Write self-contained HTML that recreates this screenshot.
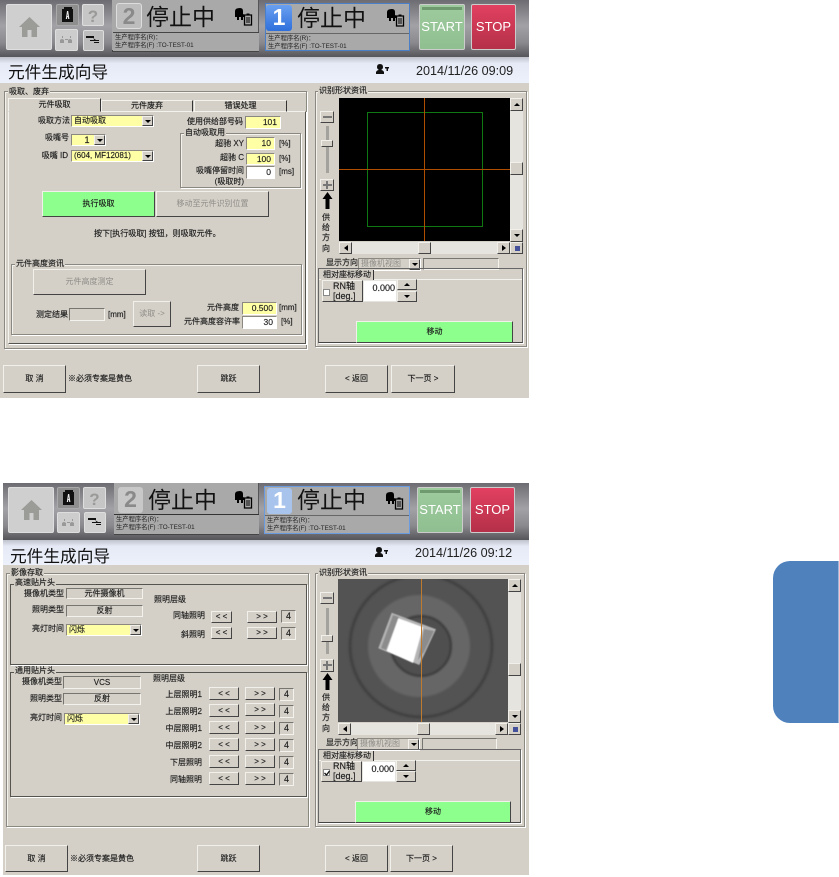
<!DOCTYPE html>
<html><head><meta charset="utf-8"><style>
html,body{margin:0;padding:0;background:#fff}
#p{position:relative;width:839px;height:877px;overflow:hidden;font:8px/10px "Liberation Sans","Noto Sans CJK SC",sans-serif;color:#1c1c1c;-webkit-text-stroke:.15px #1c1c1c;filter:blur(.3px)}
#p div,#p svg{position:absolute;box-sizing:border-box}
.t{white-space:nowrap;height:10px}
.body{background:#d4d0c8}
.hd{background:linear-gradient(#6c6c72 0,#a2a2a6 45%,#8a8a8e 75%,#55555a 100%)}
.band{background:linear-gradient(#bfc2cb 0,#e6eaf6 25%,#edf1fb 100%)}
.g{border:1px solid #8a8880;box-shadow:1px 1px 0 #fff,inset 1px 1px 0 #f4f2ec}
.gd{border:1px solid #55544f;box-shadow:1px 1px 0 #fff}
.gt{background:#d4d0c8;padding:0 1px;white-space:nowrap;height:10px}
.b{background:#d4d0c8;border:1px solid;border-color:#f2f0ea #444 #444 #f2f0ea;text-align:center;white-space:nowrap;display:flex;align-items:center;justify-content:center}
#p .dis{color:#8f8d88;-webkit-text-stroke:0}
.i{border:1px solid;border-color:#8a8880 #fff #fff #8a8880;text-align:right;padding-right:3px;white-space:nowrap;line-height:11px;font-size:8.5px}
.y{background:#ffffa6}.w{background:#fff}
.r{border:1px solid;border-color:#77756f #f4f2ec #f4f2ec #77756f;text-align:center;white-space:nowrap;line-height:10px}
.s{border:1px solid;border-color:#8a8880 #fff #fff #8a8880;white-space:nowrap;padding-left:2px;line-height:10px}
.ar{background:#d4d0c8;border:1px solid;border-color:#f2f0ea #444 #444 #f2f0ea;width:11px;top:0;bottom:0;right:0;display:flex;align-items:center;justify-content:center}
.ar:after,.up:after{content:"";border-left:3px solid transparent;border-right:3px solid transparent;border-top:3px solid #000}
.up:after{border-top:0;border-bottom:3px solid #000}
.lf:after{content:"";border-top:3px solid transparent;border-bottom:3px solid transparent;border-right:4px solid #000;border-left:0}
.rt:after{content:"";border-top:3px solid transparent;border-bottom:3px solid transparent;border-left:4px solid #000;border-right:0}
.sb{background:#e6e4de}
#p .num{border-radius:3px;color:#fff;font:bold 23px/25px "Liberation Sans",sans-serif;text-align:center;-webkit-text-stroke:0}
.stp{font-size:23px;line-height:26px;color:#111;white-space:nowrap;-webkit-text-stroke:0}
.info{font-size:6.300px;line-height:8px;color:#222;background:#a9a9a9;padding:1px 0 0 2px;white-space:nowrap;-webkit-text-stroke:0}
.pan{background:#a9a9a9}
.hb{border-radius:2px;border:1px solid #dedede;-webkit-text-stroke:0}
</style></head><body><div id="p">

<!-- ===== SCREEN 1 ===== -->
<div class="body" style="left:0;top:83px;width:529px;height:315px"></div>
<div class="hd" style="left:0;top:0;width:529px;height:57px"></div>
<div class="band" style="left:0;top:57px;width:529px;height:26px"></div>

<div class="hb" style="left:6px;top:4px;width:46px;height:46px;background:#cfcfcf"></div>
<svg style="left:18px;top:16px" width="23" height="22" viewBox="0 0 23 22"><path d="M11.500 1 1 11h3v10h5.500v-7h4v7H19V11h3z" fill="#9b9b98"/></svg>
<div class="hb" style="left:56px;top:4px;width:23px;height:22px;background:#8e8e8e;border-color:#aaa"></div>
<svg style="left:62px;top:7px" width="11" height="15" viewBox="0 0 11 15"><path d="M2 0h8v2h1v13H0V2h2z" fill="#111"/><path d="M3.800 12 5 4h1.200l1.200 8h-1.200l-.3-2H5.300L5 12zM5.400 9h.6l-.3-2.500z" fill="#eee"/></svg>
<div class="hb" style="left:82px;top:4px;width:22px;height:22px;background:#c6c6c6"></div>
<div class="t" style="left:82px;top:10px;width:22px;height:16px;text-align:center;font:bold 17px/13px 'Liberation Sans',sans-serif;color:#9a9a98;-webkit-text-stroke:0">?</div>
<div class="hb" style="left:55px;top:29px;width:23px;height:22px;background:#cdcdcd"></div>
<svg style="left:59px;top:35px" width="15" height="9" viewBox="0 0 15 9"><path d="M1 8V5q2-2 4 0v3zM9 8V5q2-2 4 0v3zM3 1h1v2H3zM11 1h1v2h-1zM6 4h3v1H6z" fill="#999"/></svg>
<div class="hb" style="left:83px;top:30px;width:21px;height:21px;background:#bdbdbd"></div>
<svg style="left:85px;top:35px" width="16" height="10" viewBox="0 0 16 10"><path d="M1 1h8v2H1zM5 5h9v1H5zM8 3l3 2-1 1zM9 7h5v1H9z" fill="#111"/></svg>

<div class="pan" style="left:112px;top:0;width:147px;height:52px;border-bottom:2px solid #444;border-right:1px solid #555"></div>
<div class="num" style="left:116px;top:3px;width:26px;height:26px;background:#bdbdbd;border:1px solid #ddd;color:#8a8a8a">2</div>
<div class="stp" style="left:146px;top:4px">停止中</div>
<svg style="left:234px;top:8px" width="20" height="18" viewBox="0 0 20 18"><path d="M1 9V3q0-3 5-3 3 0 3 3v3l2 1v2H9v3H7V9H5v3H3V9z" fill="#000"/><path d="M10.500 7h7v10h-7z" fill="none" stroke="#000" stroke-width="1.300"/><path d="M12 10h4M12 12h4M12 14h4" stroke="#000"/><path d="M12.500 5.500h3v2h-3z"/></svg>
<div class="info" style="left:113px;top:32px;width:146px;height:19px;border-top:1px solid #444">生产程序名(R)：<br>生产程序名(F) :TO-TEST-01</div>

<div class="pan" style="left:265px;top:3px;width:145px;height:48px;border:1px solid #4a7fc8"></div>
<div class="num" style="left:266px;top:5px;width:26px;height:26px;background:linear-gradient(#6aa0f0,#2f6fdc)">1</div>
<div class="stp" style="left:297px;top:5px">停止中</div>
<svg style="left:386px;top:9px" width="20" height="18" viewBox="0 0 20 18"><path d="M1 9V3q0-3 5-3 3 0 3 3v3l2 1v2H9v3H7V9H5v3H3V9z" fill="#000"/><path d="M10.500 7h7v10h-7z" fill="none" stroke="#000" stroke-width="1.300"/><path d="M12 10h4M12 12h4M12 14h4" stroke="#000"/><path d="M12.500 5.500h3v2h-3z"/></svg>
<div class="info" style="left:266px;top:33px;width:143px;height:18px;border-top:1px solid #666;border-bottom:1px solid #4a7fc8">生产程序名(R)：<br>生产程序名(F) :TO-TEST-01</div>

<div class="hb" style="left:419px;top:4px;width:46px;height:46px;background:linear-gradient(#9ecb9e,#8fbf90);border-color:#ccc;color:#fff;font-size:13px;line-height:44px;text-align:center">START</div>
<div style="left:422px;top:7px;width:40px;height:3px;background:#6f9a70"></div>
<div class="hb" style="left:471px;top:4px;width:45px;height:46px;background:linear-gradient(#e24060,#b43048);border-color:#ccc;color:#fff;font-size:13px;line-height:44px;text-align:center">STOP</div>

<div class="t" style="left:8px;top:63px;height:20px;font-size:16.700px;line-height:20px;color:#111;-webkit-text-stroke:0">元件生成向导</div>
<svg style="left:375px;top:64px" width="14" height="11" viewBox="0 0 14 11"><path d="M1 10V8q1-2 3-2-2-1-2-3 0-3 3-3t3 3q0 2-2 3 2 0 3 2v2zM10 3h4v1.500h-1V7h-1.500V4.500H10z" fill="#111"/></svg>
<div class="t" style="left:416px;top:64px;height:14px;font:12.600px/14px 'Liberation Sans',sans-serif;color:#222;-webkit-text-stroke:0">2014/11/26 09:09</div>

<!-- left -->
<div class="g" style="left:4px;top:91px;width:303px;height:258px"></div>
<div class="gt" style="left:8px;top:87px">吸取、废弃</div>
<div class="gd" style="left:8px;top:111px;width:298px;height:233px;background:#d4d0c8;border-top-color:#f4f2ec;border-left-color:#f4f2ec"></div>
<div class="t" style="left:8px;top:98px;width:93px;height:14px;background:#d4d0c8;border:1px solid;border-color:#f4f2ec #333 transparent #f4f2ec;text-align:center;line-height:11px">元件吸取</div>
<div class="t" style="left:101px;top:100px;width:92px;height:12px;border:1px solid;border-color:#f4f2ec #333 transparent #f4f2ec;text-align:center">元件废弃</div>
<div class="t" style="left:194px;top:100px;width:93px;height:12px;border:1px solid;border-color:#f4f2ec #333 transparent #f4f2ec;text-align:center">错误处理</div>

<div class="t" style="right:769px;top:116px">吸取方法</div>
<div class="s y" style="left:71px;top:115px;width:83px;height:12px">自动吸取<div class="ar"></div></div>
<div class="t" style="right:770px;top:133px">吸嘴号</div>
<div class="s y" style="left:71px;top:134px;width:35px;height:12px;text-align:center;font-size:9px">&nbsp;&nbsp;1&nbsp;&nbsp;&nbsp;&nbsp;<div class="ar"></div></div>
<div class="t" style="right:771px;top:151px">吸嘴 ID</div>
<div class="s y" style="left:71px;top:150px;width:83px;height:12px">(604, MF12081)<div class="ar"></div></div>

<div class="t" style="right:596px;top:117px">使用供给部号码</div>
<div class="i y" style="left:245px;top:116px;width:36px;height:13px">101</div>
<div class="g" style="left:180px;top:133px;width:121px;height:55px"></div>
<div class="gt" style="left:184px;top:128px">自动吸取用</div>
<div class="t" style="right:595px;top:139px">超驰 XY</div>
<div class="i y" style="left:246px;top:137px;width:29px;height:13px">10</div>
<div class="t" style="left:279px;top:139px">[%]</div>
<div class="t" style="right:595px;top:153px">超驰 C</div>
<div class="i y" style="left:246px;top:153px;width:29px;height:12px">100</div>
<div class="t" style="left:279px;top:154px">[%]</div>
<div class="t" style="right:595px;top:166px">吸嘴停留时间</div>
<div class="i w" style="left:246px;top:166px;width:29px;height:13px">0</div>
<div class="t" style="left:279px;top:167px">[ms]</div>
<div class="t" style="right:595px;top:177px">(吸取时)</div>

<div class="b" style="left:42px;top:191px;width:113px;height:26px;background:#8cff8c">执行吸取</div>
<div class="b dis" style="left:156px;top:191px;width:113px;height:26px">移动至元件识别位置</div>
<div class="t" style="left:94px;top:229px">按下[执行吸取] 按钮，则吸取元件。</div>

<div class="g" style="left:11px;top:264px;width:291px;height:71px"></div>
<div class="gt" style="left:15px;top:259px">元件高度资讯</div>
<div class="b dis" style="left:33px;top:269px;width:113px;height:26px">元件高度测定</div>
<div class="t" style="left:36px;top:310px">测定结果</div>
<div class="r" style="left:69px;top:308px;width:36px;height:13px"></div>
<div class="t" style="left:108px;top:310px">[mm]</div>
<div class="b dis" style="left:133px;top:301px;width:38px;height:26px">读取 -&gt;</div>
<div class="t" style="right:600px;top:303px">元件高度</div>
<div class="i y" style="left:242px;top:302px;width:35px;height:13px">0.500</div>
<div class="t" style="left:279px;top:303px">[mm]</div>
<div class="t" style="right:599px;top:317px">元件高度容许率</div>
<div class="i w" style="left:242px;top:316px;width:35px;height:13px">30</div>
<div class="t" style="left:281px;top:317px">[%]</div>

<div class="b" style="left:3px;top:365px;width:63px;height:28px">取 消</div>
<div class="t" style="left:68px;top:374px">※必须专案是黄色</div>
<div class="b" style="left:197px;top:365px;width:63px;height:28px">跳跃</div>

<!-- right -->
<div class="g" style="left:315px;top:91px;width:212px;height:256px"></div>
<div class="gt" style="left:318px;top:86px">识别形状资讯</div>
<div style="left:339px;top:98px;width:171px;height:143px;background:#000;overflow:hidden">
<div style="left:28px;top:14px;width:116px;height:115px;border:1px solid #107810"></div>
<div style="left:85px;top:0;width:1px;height:143px;background:#b04e00"></div>
<div style="left:0;top:71px;width:171px;height:1px;background:#b04e00"></div>
</div>
<div class="sb" style="left:510px;top:98px;width:13px;height:143px"></div>
<div class="ar up" style="left:510px;top:98px;width:13px;height:13px"></div>
<div class="b" style="left:510px;top:162px;width:13px;height:13px"></div>
<div class="ar" style="left:510px;top:229px;width:13px;height:13px"></div>
<div class="sb" style="left:339px;top:242px;width:171px;height:12px"></div>
<div class="ar lf" style="left:339px;top:242px;width:13px;height:12px"></div>
<div class="b" style="left:418px;top:242px;width:13px;height:12px"></div>
<div class="ar rt" style="left:497px;top:242px;width:13px;height:12px"></div>
<div class="b" style="left:510px;top:242px;width:13px;height:12px"><div style="left:4px;top:3px;width:5px;height:5px;background:#44509a"></div></div>

<div class="b" style="left:320px;top:111px;width:14px;height:12px"><div style="left:2px;top:4px;width:9px;height:2px;background:#777"></div></div>
<div style="left:326px;top:126px;width:3px;height:47px;background:#a4a29c"></div>
<div class="b" style="left:321px;top:140px;width:12px;height:7px"></div>
<div class="b" style="left:320px;top:179px;width:14px;height:12px"><div style="left:2px;top:4px;width:9px;height:2px;background:#777"></div><div style="left:5px;top:1px;width:2px;height:8px;background:#777"></div></div>
<svg style="left:322px;top:192px" width="11" height="18" viewBox="0 0 11 18"><path d="M5.500 0 10.500 7H7.500V17H3.500V7H.5z" fill="#000"/></svg>
<div class="t" style="left:322px;top:213px;line-height:10.200px;height:42px;width:10px">供<br>给<br>方<br>向</div>
<div class="t" style="left:326px;top:258px">显示方向</div>
<div class="s dis" style="left:358px;top:258px;width:63px;height:13px">摄像机视图<div class="ar"></div></div>
<div class="r" style="left:423px;top:258px;width:76px;height:12px"></div>
<div class="gd" style="left:318px;top:268px;width:205px;height:75px;border-color:#666 #666 #444 #666"></div>
<div style="left:319px;top:279px;width:203px;height:1px;background:#f4f2ec"></div>
<div class="t" style="left:321px;top:270px;width:53px;height:10px;border-right:1px solid #333;font-size:8px;line-height:10px;text-align:center;background:#d4d0c8">相对座标移动</div>
<div class="b" style="left:322px;top:280px;width:41px;height:22px"></div>
<div class="w" style="left:323px;top:289px;width:7px;height:7px;background:#fff;border:1px solid #888"></div>
<div class="t" style="left:333px;top:281px;height:22px;font-size:9px;line-height:10px">RN轴<br>[deg.]</div>
<div class="w" style="left:363px;top:280px;width:34px;height:22px;background:#fff;border:1px solid #e6e4de;text-align:right;padding-right:1px;font-size:9px;line-height:15px">0.000</div>
<div class="ar up" style="left:397px;top:279px;width:20px;height:11px"></div>
<div class="ar" style="left:397px;top:291px;width:20px;height:11px"></div>
<div class="b" style="left:356px;top:321px;width:157px;height:22px;background:#8cff8c">移动</div>

<div class="b" style="left:325px;top:365px;width:63px;height:28px">&lt; 返回</div>
<div class="b" style="left:391px;top:365px;width:64px;height:28px">下一页 &gt;</div>

<!-- ===== SCREEN 2 ===== -->
<div class="body" style="left:3px;top:565px;width:526px;height:310px"></div>
<div class="hd" style="left:3px;top:483px;width:526px;height:57px"></div>
<div class="band" style="left:3px;top:540px;width:526px;height:25px"></div>

<div class="hb" style="left:8px;top:487px;width:46px;height:46px;background:#cfcfcf"></div>
<svg style="left:20px;top:499px" width="23" height="22" viewBox="0 0 23 22"><path d="M11.500 1 1 11h3v10h5.500v-7h4v7H19V11h3z" fill="#9b9b98"/></svg>
<div class="hb" style="left:57px;top:487px;width:23px;height:22px;background:#8e8e8e;border-color:#aaa"></div>
<svg style="left:63px;top:490px" width="11" height="15" viewBox="0 0 11 15"><path d="M2 0h8v2h1v13H0V2h2z" fill="#111"/><path d="M3.800 12 5 4h1.200l1.200 8h-1.200l-.3-2H5.300L5 12zM5.400 9h.6l-.3-2.500z" fill="#eee"/></svg>
<div class="hb" style="left:83px;top:487px;width:23px;height:22px;background:#c6c6c6"></div>
<div class="t" style="left:83px;top:493px;width:23px;height:16px;text-align:center;font:bold 17px/13px 'Liberation Sans',sans-serif;color:#9a9a98;-webkit-text-stroke:0">?</div>
<div class="hb" style="left:57px;top:512px;width:23px;height:21px;background:#cdcdcd"></div>
<svg style="left:61px;top:518px" width="15" height="9" viewBox="0 0 15 9"><path d="M1 8V5q2-2 4 0v3zM9 8V5q2-2 4 0v3zM3 1h1v2H3zM11 1h1v2h-1zM6 4h3v1H6z" fill="#999"/></svg>
<div class="hb" style="left:84px;top:512px;width:22px;height:21px;background:#cfcfcf"></div>
<svg style="left:87px;top:517px" width="16" height="10" viewBox="0 0 16 10"><path d="M1 1h8v2H1zM5 5h9v1H5zM8 3l3 2-1 1zM9 7h5v1H9z" fill="#111"/></svg>

<div class="pan" style="left:114px;top:483px;width:145px;height:52px;border-bottom:2px solid #444;border-right:1px solid #555"></div>
<div class="num" style="left:118px;top:487px;width:25px;height:26px;background:#c8c8c8;color:#8a8a8a">2</div>
<div class="stp" style="left:148px;top:487px">停止中</div>
<svg style="left:234px;top:491px" width="20" height="18" viewBox="0 0 20 18"><path d="M1 9V3q0-3 5-3 3 0 3 3v3l2 1v2H9v3H7V9H5v3H3V9z" fill="#000"/><path d="M10.500 7h7v10h-7z" fill="none" stroke="#000" stroke-width="1.300"/><path d="M12 10h4M12 12h4M12 14h4" stroke="#000"/><path d="M12.500 5.500h3v2h-3z"/></svg>
<div class="info" style="left:114px;top:514px;width:145px;height:20px;border-top:1px solid #333">生产程序名(R)：<br>生产程序名(F) :TO-TEST-01</div>

<div class="pan" style="left:264px;top:486px;width:146px;height:48px;border:1px solid #6a9ae0"></div>
<div class="num" style="left:267px;top:488px;width:25px;height:26px;background:#a8c4ec">1</div>
<div class="stp" style="left:297px;top:487px">停止中</div>
<svg style="left:385px;top:492px" width="20" height="18" viewBox="0 0 20 18"><path d="M1 9V3q0-3 5-3 3 0 3 3v3l2 1v2H9v3H7V9H5v3H3V9z" fill="#000"/><path d="M10.500 7h7v10h-7z" fill="none" stroke="#000" stroke-width="1.300"/><path d="M12 10h4M12 12h4M12 14h4" stroke="#000"/><path d="M12.500 5.500h3v2h-3z"/></svg>
<div class="info" style="left:265px;top:515px;width:144px;height:19px;border-top:1px solid #666;border-bottom:1px solid #6a9ae0">生产程序名(R)：<br>生产程序名(F) :TO-TEST-01</div>

<div class="hb" style="left:417px;top:487px;width:46px;height:46px;background:linear-gradient(#9ecb9e,#8fbf90);border-color:#ccc;color:#fff;font-size:13px;line-height:44px;text-align:center">START</div>
<div style="left:420px;top:490px;width:40px;height:3px;background:#6f9a70"></div>
<div class="hb" style="left:470px;top:487px;width:45px;height:46px;background:linear-gradient(#e24060,#b43048);border-color:#ccc;color:#fff;font-size:13px;line-height:44px;text-align:center">STOP</div>

<div class="t" style="left:10px;top:547px;height:20px;font-size:16.700px;line-height:20px;color:#111;-webkit-text-stroke:0">元件生成向导</div>
<svg style="left:374px;top:547px" width="14" height="11" viewBox="0 0 14 11"><path d="M1 10V8q1-2 3-2-2-1-2-3 0-3 3-3t3 3q0 2-2 3 2 0 3 2v2zM10 3h4v1.500h-1V7h-1.500V4.500H10z" fill="#111"/></svg>
<div class="t" style="left:415px;top:546px;height:14px;font:12.600px/14px 'Liberation Sans',sans-serif;color:#222;-webkit-text-stroke:0">2014/11/26 09:12</div>

<!-- left 2 -->
<div class="g" style="left:6px;top:573px;width:303px;height:254px"></div>
<div class="gt" style="left:10px;top:568px">影像存取</div>
<div class="gd" style="left:10px;top:584px;width:297px;height:81px"></div>
<div class="gt" style="left:14px;top:578px">高速贴片头</div>
<div class="t" style="right:775px;top:589px">摄像机类型</div>
<div class="r" style="left:66px;top:588px;width:77px;height:11px">元件摄像机</div>
<div class="t" style="right:775px;top:605px">照明类型</div>
<div class="r" style="left:66px;top:605px;width:77px;height:12px">反射</div>
<div class="t" style="right:775px;top:624px">亮灯时间</div>
<div class="s y" style="left:66px;top:624px;width:76px;height:12px">闪烁<div class="ar"></div></div>
<div class="t" style="left:154px;top:595px">照明层级</div>
<div class="t" style="right:634px;top:611px">同轴照明</div>
<div class="b" style="left:211px;top:611px;width:21px;height:12px">&lt; &lt;</div>
<div class="b" style="left:247px;top:611px;width:30px;height:12px">&gt; &gt;</div>
<div class="r" style="left:281px;top:610px;width:15px;height:13px;font-size:9px">4</div>
<div class="t" style="right:634px;top:630px">斜照明</div>
<div class="b" style="left:211px;top:627px;width:21px;height:12px">&lt; &lt;</div>
<div class="b" style="left:247px;top:627px;width:30px;height:12px">&gt; &gt;</div>
<div class="r" style="left:281px;top:627px;width:15px;height:13px;font-size:9px">4</div>

<div class="gd" style="left:10px;top:672px;width:297px;height:125px"></div>
<div class="gt" style="left:14px;top:666px">通用贴片头</div>
<div class="t" style="right:777px;top:677px">摄像机类型</div>
<div class="r" style="left:63px;top:676px;width:78px;height:13px;line-height:12px">VCS</div>
<div class="t" style="right:777px;top:694px">照明类型</div>
<div class="r" style="left:63px;top:693px;width:78px;height:12px">反射</div>
<div class="t" style="right:777px;top:713px">亮灯时间</div>
<div class="s y" style="left:64px;top:713px;width:76px;height:12px">闪烁<div class="ar"></div></div>
<div class="t" style="left:153px;top:674px">照明层级</div>

<div class="t" style="right:637px;top:690px">上层照明1</div>
<div class="b" style="left:209px;top:687px;width:30px;height:13px">&lt; &lt;</div>
<div class="b" style="left:245px;top:687px;width:30px;height:13px">&gt; &gt;</div>
<div class="r" style="left:279px;top:688px;width:15px;height:13px;font-size:9px">4</div>
<div class="t" style="right:637px;top:707px">上层照明2</div>
<div class="b" style="left:209px;top:704px;width:30px;height:13px">&lt; &lt;</div>
<div class="b" style="left:245px;top:703px;width:30px;height:13px">&gt; &gt;</div>
<div class="r" style="left:279px;top:705px;width:15px;height:13px;font-size:9px">4</div>
<div class="t" style="right:637px;top:724px">中层照明1</div>
<div class="b" style="left:209px;top:721px;width:30px;height:13px">&lt; &lt;</div>
<div class="b" style="left:245px;top:721px;width:30px;height:13px">&gt; &gt;</div>
<div class="r" style="left:279px;top:722px;width:15px;height:13px;font-size:9px">4</div>
<div class="t" style="right:637px;top:741px">中层照明2</div>
<div class="b" style="left:209px;top:738px;width:30px;height:13px">&lt; &lt;</div>
<div class="b" style="left:245px;top:738px;width:30px;height:13px">&gt; &gt;</div>
<div class="r" style="left:279px;top:739px;width:15px;height:13px;font-size:9px">4</div>
<div class="t" style="right:637px;top:758px">下层照明</div>
<div class="b" style="left:209px;top:755px;width:30px;height:13px">&lt; &lt;</div>
<div class="b" style="left:245px;top:755px;width:30px;height:13px">&gt; &gt;</div>
<div class="r" style="left:279px;top:756px;width:15px;height:13px;font-size:9px">4</div>
<div class="t" style="right:637px;top:775px">同轴照明</div>
<div class="b" style="left:209px;top:772px;width:30px;height:13px">&lt; &lt;</div>
<div class="b" style="left:245px;top:772px;width:30px;height:13px">&gt; &gt;</div>
<div class="r" style="left:279px;top:773px;width:15px;height:13px;font-size:9px">4</div>

<div class="b" style="left:5px;top:845px;width:63px;height:27px">取 消</div>
<div class="t" style="left:70px;top:854px">※必须专案是黄色</div>
<div class="b" style="left:197px;top:845px;width:63px;height:27px">跳跃</div>

<!-- right 2 -->
<div class="g" style="left:315px;top:573px;width:210px;height:254px"></div>
<div class="gt" style="left:318px;top:568px">识别形状资讯</div>
<svg style="left:338px;top:579px" width="170" height="143" viewBox="338 579 170 143">
<defs><filter id="bl"><feGaussianBlur stdDeviation="1"/></filter><filter id="bs"><feGaussianBlur stdDeviation=".5"/></filter></defs>
<rect x="338" y="579" width="170" height="143" fill="#535353"/>
<g filter="url(#bl)">
<circle cx="421" cy="646" r="71" fill="none" stroke="#3c3c3c" stroke-width="2.500"/>
<circle cx="419" cy="646" r="51" fill="#666"/>
<circle cx="421" cy="646" r="30" fill="#505050" stroke="#333" stroke-width="2"/>
</g>
<g filter="url(#bs)">
<path d="M391.700 612.700 436 629.300 419.300 665 378.300 648.300z" fill="#b4b4b4"/>
<path d="M393 615 399 617 386 650 381 648zM424 629 434 631 424 652 418 660z" fill="#8c8c8c"/>
<path d="M398.300 618.300 423 627.300 413 663 386.700 651z" fill="#fff"/>
</g>
<rect x="421" y="579" width="1" height="143" fill="#c07a30"/>
</svg>
<div class="sb" style="left:508px;top:579px;width:13px;height:143px"></div>
<div class="ar up" style="left:508px;top:579px;width:13px;height:13px"></div>
<div class="b" style="left:508px;top:663px;width:13px;height:13px"></div>
<div class="ar" style="left:508px;top:710px;width:13px;height:13px"></div>
<div class="sb" style="left:338px;top:723px;width:170px;height:12px"></div>
<div class="ar lf" style="left:338px;top:723px;width:13px;height:12px"></div>
<div class="b" style="left:417px;top:723px;width:13px;height:12px"></div>
<div class="ar rt" style="left:495px;top:723px;width:13px;height:12px"></div>
<div class="b" style="left:508px;top:723px;width:13px;height:12px"><div style="left:4px;top:3px;width:5px;height:5px;background:#44509a"></div></div>

<div class="b" style="left:320px;top:592px;width:14px;height:12px"><div style="left:2px;top:4px;width:9px;height:2px;background:#777"></div></div>
<div style="left:326px;top:608px;width:3px;height:46px;background:#a4a29c"></div>
<div class="b" style="left:321px;top:635px;width:12px;height:7px"></div>
<div class="b" style="left:320px;top:659px;width:14px;height:13px"><div style="left:2px;top:4px;width:9px;height:2px;background:#777"></div><div style="left:5px;top:1px;width:2px;height:9px;background:#777"></div></div>
<svg style="left:322px;top:673px" width="11" height="18" viewBox="0 0 11 18"><path d="M5.500 0 10.500 7H7.500V17H3.500V7H.5z" fill="#000"/></svg>
<div class="t" style="left:322px;top:693px;line-height:10.200px;height:42px;width:10px">供<br>给<br>方<br>向</div>
<div class="t" style="left:326px;top:738px">显示方向</div>
<div class="s dis" style="left:357px;top:738px;width:63px;height:13px">摄像机视图<div class="ar"></div></div>
<div class="r" style="left:422px;top:738px;width:75px;height:12px"></div>
<div class="gd" style="left:318px;top:749px;width:203px;height:74px;border-color:#666 #666 #444 #666"></div>
<div style="left:319px;top:760px;width:201px;height:1px;background:#f4f2ec"></div>
<div class="t" style="left:321px;top:751px;width:53px;height:10px;border-right:1px solid #333;text-align:center;background:#d4d0c8">相对座标移动</div>
<div class="b" style="left:321px;top:761px;width:41px;height:21px"></div>
<div style="left:323px;top:769px;width:7px;height:7px;background:#fff;border:1px solid #888"></div>
<svg style="left:324px;top:770px" width="6" height="6" viewBox="0 0 6 6"><path d="M.5 3 2.500 5 5.500 1" fill="none" stroke="#111" stroke-width="1.300"/></svg>
<div class="t" style="left:333px;top:761px;height:22px;font-size:9px;line-height:10px">RN轴<br>[deg.]</div>
<div style="left:362px;top:761px;width:34px;height:21px;background:#fff;border:1px solid #e6e4de;text-align:right;padding-right:1px;font-size:9px;line-height:15px">0.000</div>
<div class="ar up" style="left:396px;top:760px;width:20px;height:11px"></div>
<div class="ar" style="left:396px;top:771px;width:20px;height:11px"></div>
<div class="b" style="left:355px;top:801px;width:156px;height:22px;background:#8cff8c">移动</div>

<div class="b" style="left:325px;top:845px;width:63px;height:27px">&lt; 返回</div>
<div class="b" style="left:390px;top:845px;width:63px;height:27px">下一页 &gt;</div>

<!-- blue side tab -->
<div style="left:773px;top:561px;width:66px;height:162px;background:#4f81bd;border-radius:17px 0 0 17px;border-right:1px solid #9db8d9"></div>

</div></body></html>
